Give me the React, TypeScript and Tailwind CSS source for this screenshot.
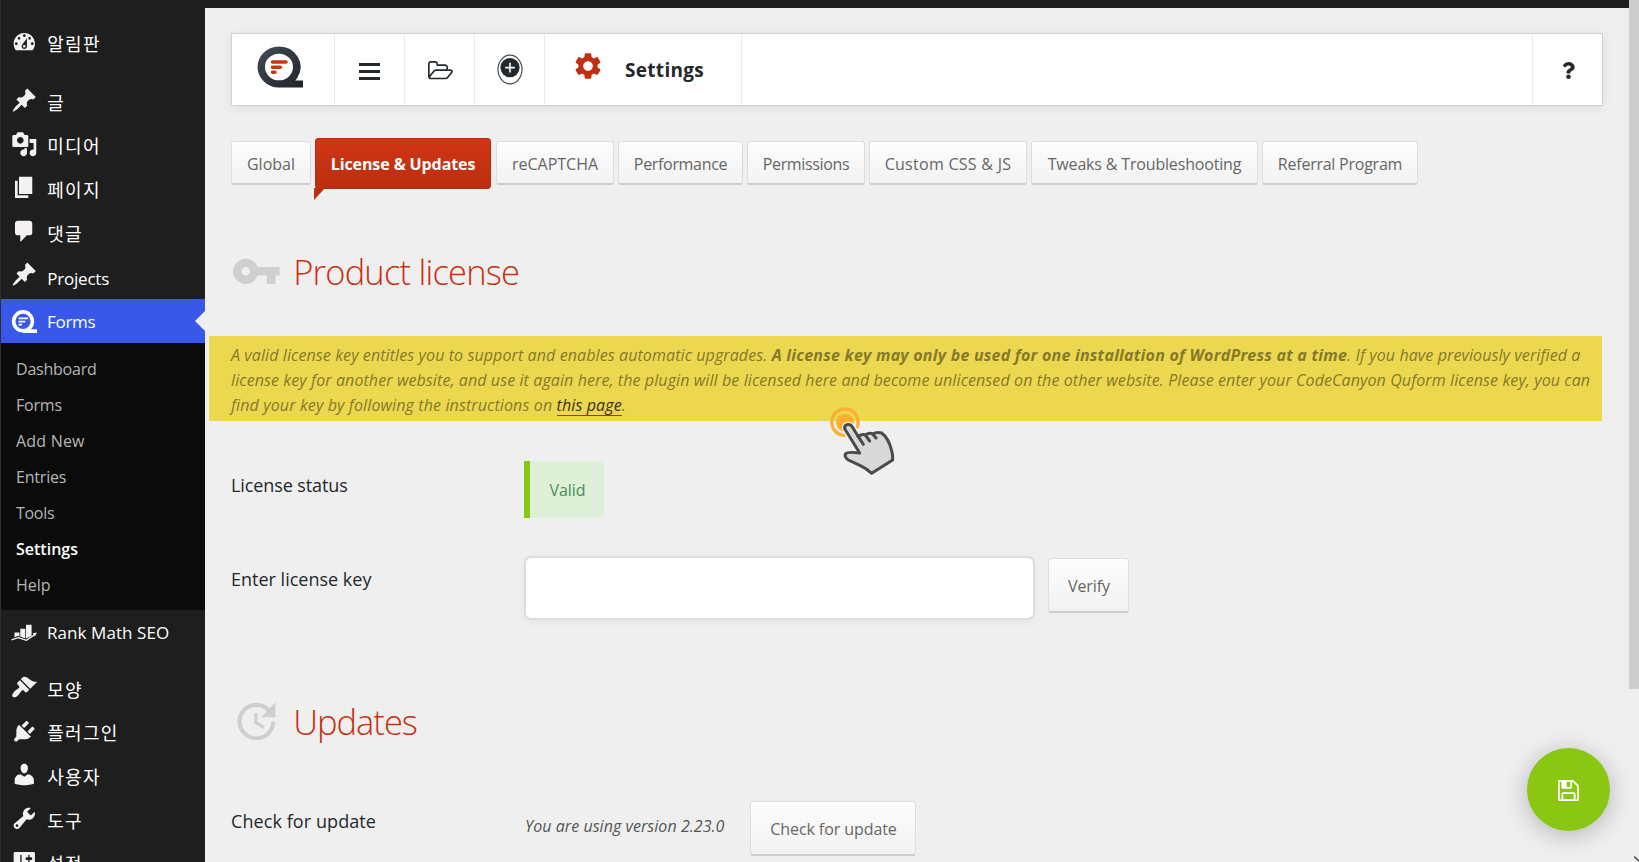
import React from "react";
import { MdSettings, MdUpdate, MdVpnKey } from "react-icons/md";
import { FaQuestion } from "react-icons/fa";

const icons = {
  dashboard:
    "M3.76 16h12.48c1.1-1.37 1.76-3.11 1.76-5 0-4.42-3.58-8-8-8s-8 3.58-8 8c0 1.89.66 3.63 1.76 5zM10 4c.55 0 1 .45 1 1s-.45 1-1 1-1-.45-1-1 .45-1 1-1zM6 6c.55 0 1 .45 1 1s-.45 1-1 1-1-.45-1-1 .45-1 1-1zm8 0c.55 0 1 .45 1 1s-.45 1-1 1-1-.45-1-1 .45-1 1-1zm-5.370 5.550L12 7v6c0 1.100-.9 2-2 2s-2-.9-2-2c0-.570.240-1.080.630-1.450zM4 10c.550 0 1 .450 1 1s-.450 1-1 1-1-.450-1-1 .450-1 1-1zm12 0c.550 0 1 .450 1 1s-.450 1-1 1-1-.450-1-1 .450-1 1-1zm-5 3c0-.550-.450-1-1-1s-1 .450-1 1 .450 1 1 1 1-.450 1-1z",
  pin: "M10.44 3.02l1.82-1.82 6.36 6.35-1.83 1.82c-1.05-.68-2.48-.57-3.41.36l-.75.75c-.92.93-1.04 2.35-.35 3.41l-1.83 1.82-2.41-2.41-2.8 2.79c-.42.42-3.38 2.71-3.8 2.29s1.86-3.39 2.28-3.81l2.79-2.79L4.1 9.36l1.83-1.82c1.05.69 2.48.57 3.4-.36l.75-.75c.93-.92 1.05-2.35.36-3.41z",
  media:
    "M13 11V4c0-.55-.45-1-1-1h-1.67L9 1H5L3.67 3H2c-.55 0-1 .45-1 1v7c0 .55.45 1 1 1h10c.55 0 1-.45 1-1zM7 4.5c1.38 0 2.5 1.12 2.5 2.5S8.38 9.5 7 9.5 4.5 8.38 4.5 7 5.62 4.5 7 4.5zM14 6h5v10.5c0 1.38-1.12 2.5-2.5 2.5S14 17.88 14 16.5s1.12-2.5 2.5-2.5c.17 0 .34.02.5.05V9h-3V6zM10 14.05V13h2v3.5c0 1.38-1.12 2.5-2.5 2.5S7 17.88 7 16.5 8.12 14 9.5 14c.17 0 .34.02.5.05z",
  page: "M6 15V2h10v13H6zm-1 1h8v2H3V5h2v11z",
  comment: "M5 2h9c1.1 0 2 .9 2 2v7c0 1.1-.9 2-2 2h-2l-5 5v-5H5c-1.1 0-2-.9-2-2V4c0-1.1.9-2 2-2z",
  brush:
    "M14.48 11.06L7.41 3.99l1.5-1.5c.5-.56 2.3-.47 3.51.32 1.21.8 1.43 1.28 2.91 2.1 1.18.64 2.45 1.26 4.45.85zm-.71.71L6.7 4.7 4.93 6.47c-.39.39-.39 1.02 0 1.41l1.06 1.06c.39.39.39 1.03 0 1.42-.6.6-1.43 1.11-2.21 1.69-.35.26-.7.53-1.01.84C1.43 14.23.4 16.08 1.4 17.07c.99 1 2.84-.03 4.18-1.36.31-.31.58-.66.85-1.02.57-.78 1.08-1.61 1.69-2.21.39-.39 1.02-.39 1.41 0l1.06 1.06c.39.39 1.02.39 1.41 0z",
  plug: "M13.11 4.36L9.87 7.6 8 5.73l3.24-3.24c.35-.34 1.05-.2 1.56.32.52.51.66 1.21.31 1.55zm-8 1.77l.91-1.12 9.01 9.01-1.19.84c-.71.71-2.63 1.16-3.82 1.16H6.14L4.9 17.26c-.59.59-1.54.59-2.12 0-.59-.58-.59-1.53 0-2.12l1.24-1.24v-3.88c0-1.13.4-3.19 1.09-3.89zm7.26 3.97l3.24-3.24c.34-.35 1.04-.21 1.55.31.52.51.66 1.21.31 1.55l-3.24 3.25z",
  user: "M10 9.25c-2.27 0-2.73-3.44-2.73-3.44C7 4.02 7.82 2 9.97 2c2.16 0 2.98 2.02 2.71 3.81 0 0-.41 3.44-2.68 3.44zm0 2.57L12.72 10c2.39 0 4.52 2.33 4.52 4.53v2.49s-3.65 1.13-7.24 1.13c-3.65 0-7.24-1.13-7.24-1.13v-2.49c0-2.25 1.94-4.48 4.47-4.48z",
  wrench:
    "M16.68 9.77c-1.34 1.34-3.3 1.67-4.95.99l-5.41 6.52c-.99.99-2.59.99-3.58 0s-.99-2.59 0-3.57l6.52-5.42c-.68-1.65-.35-3.61.99-4.95 1.28-1.28 3.12-1.62 4.72-1.06l-2.89 2.89 2.82 2.82 2.86-2.87c.53 1.58.18 3.39-1.08 4.65zM3.81 16.21c.4.39 1.04.39 1.43 0 .4-.4.4-1.04 0-1.43-.39-.4-1.03-.4-1.43 0-.39.39-.39 1.03 0 1.43z",
  sliders:
    "M18 16V4c0-.55-.45-1-1-1H3c-.55 0-1 .45-1 1v12c0 .55.45 1 1 1h14c.55 0 1-.45 1-1zM8 11h1c.55 0 1 .45 1 1s-.45 1-1 1H8v1.5c0 .28-.22.5-.5.5s-.5-.22-.5-.5V13H6c-.55 0-1-.45-1-1s.45-1 1-1h1V5.500c0-.28.22-.5.5-.5s.5.22.5.5V11zm5-2h-1c-.55 0-1-.45-1-1s.45-1 1-1h1V5.500c0-.28.22-.5.5-.5s.5.22.5.5V7h1c.55 0 1 .45 1 1s-.45 1-1 1h-1v5.500c0 .28-.22.5-.5.5s-.5-.22-.5-.5V9z",
};

function DashIcon({ name }: { name: keyof typeof icons }) {
  return (
    <svg viewBox="0 0 20 20" className="size-[26.6px] shrink-0 fill-[#f3f1f1]">
      <path fillRule="evenodd" d={icons[name]} />
    </svg>
  );
}

type MenuItem = { icon: keyof typeof icons; label: string; className: string };

const korean = "text-[18px] tracking-[1.3px]";

const upperMenu: MenuItem[] = [
  { icon: "pin", label: "글", className: korean },
  { icon: "media", label: "미디어", className: korean },
  { icon: "page", label: "페이지", className: korean },
  { icon: "comment", label: "댓글", className: korean },
  { icon: "pin", label: "Projects", className: "pt-[3px] text-[17px] tracking-[-0.2px]" },
];

const lowerMenu: MenuItem[] = [
  { icon: "brush", label: "모양", className: korean },
  { icon: "plug", label: "플러그인", className: korean },
  { icon: "user", label: "사용자", className: korean },
  { icon: "wrench", label: "도구", className: korean },
  { icon: "sliders", label: "설정", className: korean },
];

const subMenu = [
  { label: "Dashboard", className: "tracking-[-0.23px]" },
  { label: "Forms", className: "tracking-[-0.2px]" },
  { label: "Add New", className: "tracking-[0.2px]" },
  { label: "Entries", className: "tracking-[-0.2px]" },
  { label: "Tools", className: "tracking-[-0.3px]" },
  { label: "Settings", className: "font-semibold text-white" },
  { label: "Help", className: "tracking-[0px]" },
];

function SideItem({ item }: { item: MenuItem }) {
  return (
    <a className="flex h-[43.6px] shrink-0 items-center pl-[10px]">
      <span className="-mt-[5px]">
        <DashIcon name={item.icon} />
      </span>
      <span className={"ml-[9.6px] leading-none whitespace-nowrap text-white " + item.className}>{item.label}</span>
    </a>
  );
}

function RankMathIcon() {
  return (
    <svg viewBox="0 0 26 17" className="h-[17px] w-[26px] shrink-0">
      <path fill="#f3f1f1" d="M3.500 8.500h5v4.200l-1.800-.9-3.200 1.600zM9.300 4.800h5v9.600l-5-1.800zM15 .7h5.600v11l-5.600 2.900z" />
      <path fill="none" stroke="#f3f1f1" strokeWidth="1.300" d="M.5 15.900l6.700-2.300 8.200 2.700 8-5.400" />
      <path fill="#f3f1f1" d="M21.600 9.200l4.300-.6-2 3.800z" />
    </svg>
  );
}

function QIcon() {
  return (
    <svg viewBox="0 0 26 23" className="h-[23px] w-[26px] shrink-0">
      <circle cx="12" cy="11.3" r="9.400" fill="none" stroke="#fff" strokeWidth="3.600" />
      <path fill="#fff" d="M12 19.300h14V23H12z" />
      <path stroke="#fff" strokeWidth="1.700" strokeLinecap="round" d="M8.300 8.300h8M8.300 11.600h5.300M8.300 14.700h2" />
    </svg>
  );
}

function Sidebar() {
  return (
    <nav className="flex w-[205px] shrink-0 flex-col overflow-hidden border-l border-[#2f2f2f] bg-[#1e1e1e] pt-[22.5px]">
      <SideItem item={{ icon: "dashboard", label: "알림판", className: korean }} />
      <div className="mt-[15px] flex flex-col">
        {upperMenu.map((m, i) => (
          <SideItem key={i} item={m} />
        ))}
      </div>
      <a className="flex h-[44px] shrink-0 items-center bg-[#3858e9] pl-[10px]">
        <QIcon />
        <span className="ml-[10px] pt-[2px] text-[17px] tracking-[-0.3px] text-white">Forms</span>
        <svg viewBox="0 0 10 20" className="ml-auto h-[20px] w-[10px] fill-[#efefef]">
          <path d="M10 0v20L0 10z" />
        </svg>
      </a>
      <ul className="flex h-[267px] shrink-0 flex-col bg-[#0b0b0b] pt-[8px] pl-[15px] text-[16px] text-[#b6b6b6]">
        {subMenu.map((s) => (
          <li key={s.label} className={"flex h-[36px] items-center " + s.className}>
            {s.label}
          </li>
        ))}
      </ul>
      <a className="flex h-[44px] shrink-0 items-center pl-[10px]">
        <RankMathIcon />
        <span className="ml-[10px] pt-px text-[17px] tracking-[0.07px] text-white">Rank Math SEO</span>
      </a>
      <div className="mt-[14px] flex flex-col">
        {lowerMenu.map((m) => (
          <SideItem key={m.label} item={m} />
        ))}
      </div>
    </nav>
  );
}

function Toolbar() {
  const cell = "flex items-center justify-center border-r border-[#ebebeb]";
  return (
    <header className="flex h-[73px] border border-[#d2d2d2] bg-white text-[#23282d] shadow-[0_2px_10px_rgba(0,0,0,0.08)]">
      <div className={cell + " w-[103px]"}>
        <svg viewBox="0 0 46 42" className="-mt-[5px] -ml-[7px] h-[42px] w-[46px]">
          <defs>
            <linearGradient id="q" x1="0" y1="0" x2="1" y2="1">
              <stop offset="0" stopColor="#434c55" />
              <stop offset="1" stopColor="#1f2428" />
            </linearGradient>
          </defs>
          <path
            fill="url(#q)"
            fillRule="evenodd"
            d="M22 0.500a21.500 20.500 0 0 1 18.500 31q-.8 1.800-2.300 2.900H46V41.500H22a21.500 20.500 0 0 1 0-41zM22 7.700a14 13.300 0 1 0 0 26.600a14 13.300 0 0 0 0-26.600z"
          />
          <path stroke="#cf3512" strokeWidth="3.600" strokeLinecap="round" d="M15.500 16h13.500M15.500 21.200h7.800M15.500 26.300h2.400" />
        </svg>
      </div>
      <div className={cell + " w-[70px] pt-[3px]"}>
        <svg viewBox="0 0 21 17" className="h-[17px] w-[21px] fill-[#23282d]">
          <path d="M0 0h21v3H0zM0 7h21v3H0zM0 14h21v3H0z" />
        </svg>
      </div>
      <div className={cell + " w-[70px] pt-[2px] pl-[2px]"}>
        <svg viewBox="0 128 1920 1536" className="h-[20px] w-[25px] fill-[#23282d]">
          <path d="M1781 931q0-35-53-35H640q-40 0-85.500 21.500T483 970l-294 363q-18 24-18 40 0 35 53 35h1088q40 0 86-22t71-53l294-363q18-22 18-39zM640 768h768V608q0-40-28-68t-68-28H736q-40 0-68-28t-28-68v-64q0-40-28-68t-68-28H224q-40 0-68 28t-28 68v853l256-315q44-53 116-87.500T640 768zm1269 163q0 62-46 120l-295 363q-43 53-116 87.500t-140 34.500H224q-92 0-158-66T0 1312V352q0-92 66-158t158-66h320q92 0 158 66t66 158v32h544q92 0 158 66t66 158v160h192q54 0 99 24.500t67 70.500q15 32 15 68z" />
        </svg>
      </div>
      <div className={cell + " w-[70px]"}>
        <svg viewBox="0 0 26 31" className="h-[31px] w-[26px]">
          <ellipse cx="13" cy="15.500" rx="12" ry="14.300" fill="#fff" stroke="#4a4e52" strokeWidth="1.200" />
          <circle cx="13" cy="13.600" r="9.600" fill="#23282d" />
          <path stroke="#fff" strokeWidth="1.600" d="M13 8.800v9.600M8.200 13.600h9.600" />
        </svg>
      </div>
      <div className="flex w-[197px] items-center border-r border-[#ebebeb] pl-[27px]">
        <MdSettings className="-mt-[7px] size-[32px] text-[#c03010]" />
        <span className="ml-[21px] pt-[2px] text-[19px] font-bold tracking-[0.3px]">Settings</span>
      </div>
      <div className="ml-auto flex w-[70px] items-center justify-center border-l border-[#ebebeb] pt-[2px] pl-px">
        <FaQuestion className="size-[17px]" />
      </div>
    </header>
  );
}

const buttonFace =
  "flex items-center justify-center rounded-[3px] border border-[#dedede] border-b-2 border-b-[#cdcdcd] bg-linear-to-b from-[#fdfdfd] to-[#f2f2f2] pt-[2px] text-[16px] whitespace-nowrap text-[#666]";

const tabs = [
  { label: "reCAPTCHA", className: "w-[118px] tracking-[0px]" },
  { label: "Performance", className: "w-[125px] tracking-[-0.32px]" },
  { label: "Permissions", className: "w-[118px] tracking-[-0.36px]" },
  { label: "Custom CSS & JS", className: "w-[158px] tracking-[0.28px]" },
  { label: "Tweaks & Troubleshooting", className: "w-[227px] tracking-[-0.17px]" },
  { label: "Referral Program", className: "w-[156px] tracking-[-0.24px]" },
];

function Tabs() {
  return (
    <div className="mt-[32px] flex h-[62px] items-start">
      <div className={buttonFace + " mt-[3px] h-[44px] w-[80px]"}>Global</div>
      <div className="ml-[4px] flex flex-col">
        <div className="flex h-[51px] w-[176px] items-center justify-center rounded-[3px] border border-[#b62c0e] bg-linear-to-b from-[#d13513] to-[#bb2e10] pt-px text-[16px] font-bold tracking-[-0.1px] whitespace-nowrap text-white">
          License &amp; Updates
        </div>
        <svg viewBox="0 0 11 12" className="-mt-px -ml-px h-[12px] w-[11px] fill-[#bb2e10]">
          <path d="M0 0h11L0 12z" />
        </svg>
      </div>
      <div className="mt-[3px] ml-[5px] flex gap-[4px]">
        {tabs.map((t) => (
          <div key={t.label} className={buttonFace + " h-[44px] shrink-0 " + t.className}>
            {t.label}
          </div>
        ))}
      </div>
    </div>
  );
}

function PointerHand() {
  return (
    <svg viewBox="386 258 203 213" className="absolute top-[70px] left-[619.700px] h-[71px] w-[67.700px]">
      <path fill="none" stroke="#fbb034" strokeWidth="10" strokeLinecap="round" d="M431 346A39.500 39.500 0 1 1 471 320" />
      <circle cx="434" cy="308" r="27" fill="#fbb034" />
      <path fill="none" stroke="#f4efd8" strokeWidth="18" strokeLinecap="round" d="M446 345L434 326Q432 314 444 314Q451 314 456 322L466 338" />
      <path
        fill="#d8d8d8"
        stroke="#4a4a4a"
        strokeWidth="9"
        strokeLinejoin="round"
        d="M478 399L434 328Q430 318 440 314Q450 311 456 321L474 350Q484 341 496 345Q505 337 518 342Q528 335 544 339Q564 354 573 388Q578 404 577 420L514 460Q499 446 480 437L444 420Q432 412 435 402Q441 394 478 399Z"
      />
      <path fill="none" stroke="#4a4a4a" strokeWidth="9" strokeLinecap="round" d="M472 347L489 373M495 345L508 363M517 342L527 354" />
    </svg>
  );
}

function LicenseNote() {
  return (
    <div className="relative -mx-px mt-[38px] -ml-[22px] h-[85px] w-[1393px] bg-[#ecd84e] pt-[7px] pl-[22px] text-[16px] leading-[25px] tracking-[0.099px] whitespace-nowrap text-[#86792b] italic">
      <p>
        A valid license key entitles you to support and enables automatic upgrades.{" "}
        <b className="font-bold tracking-[0.225px]">
          A license key may only be used for one installation of WordPress at a time
        </b>
        . If you have previously verified a
      </p>
      <p>
        license key for another website, and use it again here, the plugin will be licensed here and become unlicensed on
        the other website. Please enter your CodeCanyon Quform license key, you can
      </p>
      <p className="tracking-[0.12px]">
        find your key by following the instructions on{" "}
        <a className="inline-block h-[23px] border-b border-[#b5330f] text-[#36311a]">this page</a>.
      </p>
      <PointerHand />
    </div>
  );
}

function SaveButton() {
  return (
    <button className="absolute top-[748px] left-[1527px] flex size-[83px] items-center justify-center rounded-full bg-[#8ac712] pt-[2px] shadow-[0_4px_24px_rgba(0,0,0,0.25)]">
      <svg viewBox="128 128 1536 1536" className="size-[21px] fill-white">
        <path d="M512 1536h768v-384H512v384zm896 0h128V640q0-14-10-38.500t-20-34.500l-281-281q-10-10-34-20t-39-10v416q0 40-28 68t-68 28H480q-40 0-68-28t-28-68V256H256v1280h128v-416q0-40 28-68t68-28h832q40 0 68 28t28 68v416zm-384-928V288q0-13-9.500-22.500T992 256H800q-13 0-22.500 9.500T768 288v320q0 13 9.500 22.500T800 640h192q13 0 22.500-9.500t9.500-22.500zm640 32v928q0 40-28 68t-68 28H224q-40 0-68-28t-28-68V224q0-40 28-68t68-28h928q40 0 88 20t76 48l280 280q28 28 48 76t20 88z" />
      </svg>
    </button>
  );
}

export default function App() {
  return (
    <div className="relative flex h-[862px] w-[1639px] overflow-hidden bg-[#efefef] font-['Open_Sans','Noto_Sans_CJK_KR',sans-serif] text-[#23282d]">
      <Sidebar />
      <div className="flex w-[1424px] shrink-0 flex-col">
        <div className="h-[8px] bg-[#1e1e1e]" />
        <main className="mt-[25px] ml-[26px] w-[1372px]">
          <Toolbar />
          <Tabs />
          <section className="mt-[45px]">
            <div className="flex h-[53px] items-center">
              <MdVpnKey className="-ml-[0.5px] size-[50.700px] text-[#cfcfcf]" />
              <h2 className="ml-[12px] text-[34.500px] leading-[53px] font-light tracking-[-0.8px] text-[#c9300f]">
                Product license
              </h2>
            </div>
            <LicenseNote />
            <div className="mt-[40px] flex h-[57px]">
              <div className="w-[293px] pt-[11px] text-[18px] leading-[27px] tracking-[-0.1px]">License status</div>
              <div className="flex w-[80px] items-center justify-center rounded-r-[3px] border-l-6 border-[#88c90f] bg-[#dff0d8] pt-px pl-px text-[16px] tracking-[-0.1px] text-[#4a8c5a]">
                Valid
              </div>
            </div>
            <div className="mt-[38px] flex h-[64px]">
              <div className="w-[293px] pt-[10px] text-[18px] leading-[27px]">Enter license key</div>
              <div className="w-[511px] rounded-[7px] border-2 border-[#dcdcdc] bg-white shadow-[0_2px_8px_rgba(0,0,0,0.05)]" />
              <div className={buttonFace + " mt-[2px] ml-[13px] h-[55px] w-[81px] pl-px tracking-[-0.1px]"}>Verify</div>
            </div>
          </section>
          <section className="mt-[75px]">
            <div className="flex h-[53px] items-center">
              <MdUpdate className="-ml-[0.5px] size-[50.700px] text-[#cfcfcf]" />
              <h2 className="ml-[12px] text-[34.500px] leading-[53px] font-light tracking-[-1px] text-[#c9300f]">
                Updates
              </h2>
            </div>
            <div className="mt-[53px] flex h-[55px]">
              <div className="w-[294px] pt-[7px] text-[18px] leading-[27px] tracking-[0.08px]">Check for update</div>
              <div className="w-[225px] pt-[13px] text-[16px] leading-[25px] tracking-[0.05px] whitespace-nowrap text-[#555] italic">
                You are using version 2.23.0
              </div>
              <div className={buttonFace + " w-[166px] pl-px tracking-[-0.08px]"}>Check for update</div>
            </div>
          </section>
        </main>
      </div>
      <div className="h-[689px] w-[10px] bg-[#cdcdcd]" />
      <SaveButton />
      <svg viewBox="0 0 5 6" className="absolute right-0 bottom-0 h-[6px] w-[5px]">
        <path d="M0 .5l5 4.500" stroke="#444" strokeWidth="1.500" />
      </svg>
    </div>
  );
}
